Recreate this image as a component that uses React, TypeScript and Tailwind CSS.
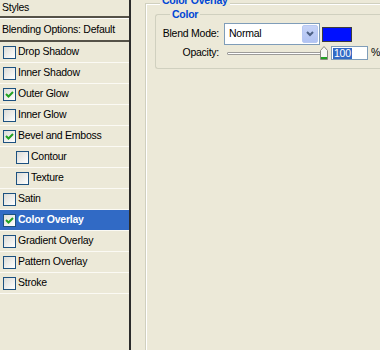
import React from "react";

const items: { label: string; checked: boolean; indent?: boolean; active?: boolean }[] = [
  { label: "Drop Shadow", checked: false },
  { label: "Inner Shadow", checked: false },
  { label: "Outer Glow", checked: true },
  { label: "Inner Glow", checked: false },
  { label: "Bevel and Emboss", checked: true },
  { label: "Contour", checked: false, indent: true },
  { label: "Texture", checked: false, indent: true },
  { label: "Satin", checked: false },
  { label: "Color Overlay", checked: true, active: true },
  { label: "Gradient Overlay", checked: false },
  { label: "Pattern Overlay", checked: false },
  { label: "Stroke", checked: false },
];

function Check({ on }: { on: boolean }) {
  return (
    <span className="w-[13px] h-[13px] shrink-0 border border-[#1C5180] bg-gradient-to-br from-[#DCDCD7] to-white flex items-center justify-center">
      {on && (
        <svg width="9" height="9" viewBox="0 0 9 9">
          <path d="M1 4 L3.5 6.5 L8 2" stroke="#21A121" strokeWidth="2" fill="none" />
        </svg>
      )}
    </span>
  );
}

export default function App() {
  return (
    <div
      className="w-[380px] h-[350px] overflow-hidden bg-[#ECE9D8] flex text-[10.5px] tracking-[-0.25px] text-black"
      style={{ fontFamily: '"Liberation Sans", Arial, sans-serif' }}
    >
      {/* Styles list */}
      <div className="w-[131px] shrink-0 flex flex-col border-r-2 border-r-[#2b2b2b]">
        <div className="h-[16px] flex items-center px-[2px]">Styles</div>
        <div className="h-[2px] bg-[#555248]" />
        <div className="h-[22px] flex items-center px-[2px] border-t border-white">Blending Options: Default</div>
        <div className="h-[2px] bg-[#555248]" />
        {items.map((it) => (
          <div
            key={it.label}
            className={
              "h-[21px] flex items-center gap-[2px] border-b border-[#FBFAF4] " +
              (it.indent ? "pl-[16px] " : "pl-[3px] ") +
              (it.active ? "bg-[#316AC5] text-white font-bold" : "")
            }
          >
            <Check on={it.checked} />
            <span>{it.label}</span>
          </div>
        ))}
      </div>

      {/* Options */}
      <div className="flex-1 pl-[14px] pt-[3px]">
        <div className="relative h-full border-l border-t border-[#D0D0BF] shadow-[inset_1px_1px_0_#fff] pl-[9px] pt-[10px]">
          <span className="absolute left-[14px] top-[-11px] px-[2px] bg-[#ECE9D8] font-bold text-[#0046D5]">Color Overlay</span>

          <div className="relative border-l border-t border-b border-[#D0D0BF] rounded-l-[3px] pt-[8px] pb-[8px]">
            <span className="absolute left-[14px] top-[-8px] px-[2px] bg-[#ECE9D8] font-bold text-[#0046D5]">Color</span>

            <div className="flex items-center">
              <span className="w-[63px] text-right">Blend Mode:</span>
              <div className="ml-[5px] w-[96px] h-[22px] border border-[#7F9DB9] bg-white flex items-stretch">
                <span className="flex-1 flex items-center pl-[4px]">Normal</span>
                <span className="w-[16px] m-[1px] rounded-[2px] bg-gradient-to-b from-[#C6D3F7] to-[#B1C3F3] border border-[#B7C8F2] flex items-center justify-center">
                  <svg width="8" height="6" viewBox="0 0 8 6">
                    <path d="M1 1 L4 4 L7 1" stroke="#4D6185" strokeWidth="2" fill="none" />
                  </svg>
                </span>
              </div>
              <span className="ml-[2px] w-[30px] h-[15px] bg-[#0010FF] border border-[#3d3d3d]" />
            </div>

            <div className="flex items-center mt-[1px] h-[14px]">
              <span className="w-[63px] text-right">Opacity:</span>
              <div className="ml-[8px] w-[101px] h-[14px] flex items-center relative">
                <div className="w-[95px] h-[3px] border border-[#9D9C99] bg-white rounded-[1px]" />
                <svg className="absolute right-0 top-0" width="8" height="14" viewBox="0 0 8 14">
                  <path d="M0.5 4.5 L4 0.5 L7.5 4.5 L7.5 13.5 L0.5 13.5 Z" fill="#F7F7F4" stroke="#8A8A80" />
                  <rect x="1" y="11" width="6" height="2" fill="#21A121" />
                </svg>
              </div>
              <div className="ml-[3px] w-[37px] h-[14px] border border-[#7F9DB9] bg-white flex items-center pl-[1px]">
                <span className="bg-[#316AC5] text-white leading-[11px] px-[1px]">100</span>
              </div>
              <span className="ml-[3px]">%</span>
            </div>
          </div>
        </div>
      </div>
    </div>
  );
}
